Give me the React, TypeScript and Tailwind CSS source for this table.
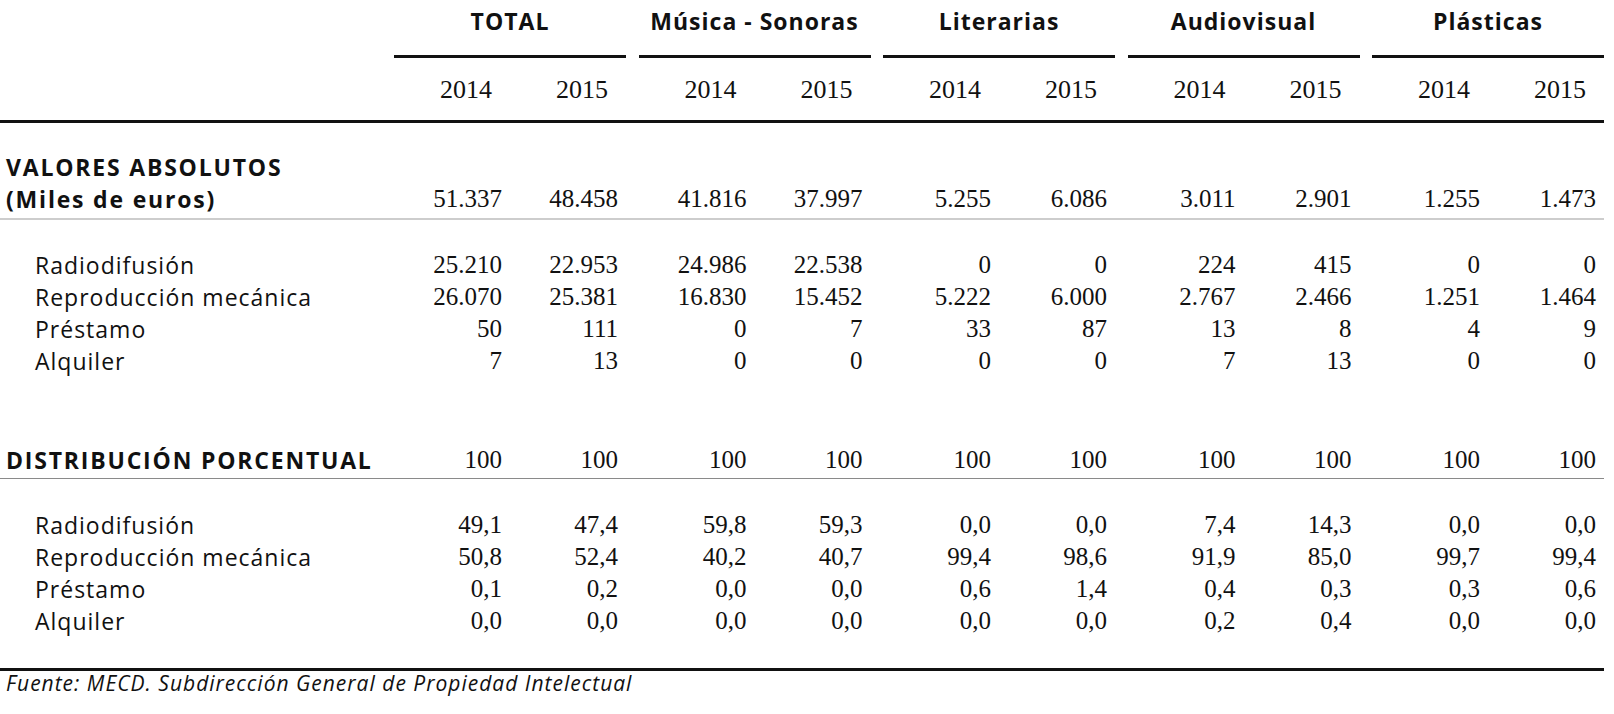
const groups = ["TOTAL", "Música - Sonoras", "Literarias", "Audiovisual", "Plásticas"];

const absolutos = ["51.337", "48.458", "41.816", "37.997", "5.255", "6.086", "3.011", "2.901", "1.255", "1.473"];

const absRows = [
  { label: "Radiodifusión", values: ["25.210", "22.953", "24.986", "22.538", "0", "0", "224", "415", "0", "0"] },
  { label: "Reproducción mecánica", values: ["26.070", "25.381", "16.830", "15.452", "5.222", "6.000", "2.767", "2.466", "1.251", "1.464"] },
  { label: "Préstamo", values: ["50", "111", "0", "7", "33", "87", "13", "8", "4", "9"] },
  { label: "Alquiler", values: ["7", "13", "0", "0", "0", "0", "7", "13", "0", "0"] },
];

const pctTotals = ["100", "100", "100", "100", "100", "100", "100", "100", "100", "100"];

const pctRows = [
  { label: "Radiodifusión", values: ["49,1", "47,4", "59,8", "59,3", "0,0", "0,0", "7,4", "14,3", "0,0", "0,0"] },
  { label: "Reproducción mecánica", values: ["50,8", "52,4", "40,2", "40,7", "99,4", "98,6", "91,9", "85,0", "99,7", "99,4"] },
  { label: "Préstamo", values: ["0,1", "0,2", "0,0", "0,0", "0,6", "1,4", "0,4", "0,3", "0,3", "0,6"] },
  { label: "Alquiler", values: ["0,0", "0,0", "0,0", "0,0", "0,0", "0,0", "0,2", "0,4", "0,0", "0,0"] },
];

const sans = "font-['Open_Sans','Noto_Sans',sans-serif]";
const serif = "font-['Liberation_Serif','Times_New_Roman',serif]";

const Values = ({ values }: { values: string[] }) => (
  <div className="flex gap-[12.5px]">
    {groups.map((g, i) => (
      <div key={g} className="grid w-[232px] grid-cols-2">
        <div className="pr-[8px] text-right">{values[i * 2]}</div>
        <div className="pr-[8px] text-right">{values[i * 2 + 1]}</div>
      </div>
    ))}
  </div>
);

const DataRow = ({ label, values }: { label: string; values: string[] }) => (
  <div className="flex h-[32px] items-center">
    <div className={`w-[394px] shrink-0 pl-[35px] text-[23px] tracking-[1px] text-[#111] ${sans}`}>{label}</div>
    <div className={`text-[25px] text-[#111] ${serif}`}>
      <Values values={values} />
    </div>
  </div>
);

export default function App() {
  return (
    <div className="h-[714px] w-[1614px] bg-white text-[#111]">
      <div className="w-[1604px]">
        {/* group headings */}
        <div className="flex">
          <div className="w-[394px] shrink-0" />
          <div className="flex gap-[12.5px]">
            {groups.map((g) => (
              <div
                key={g}
                className={`w-[232px] border-b-[3px] border-[#111] pt-[6px] pb-[19px] text-center text-[23px] leading-[30px] font-bold tracking-[1px] ${sans}`}
              >
                {g}
              </div>
            ))}
          </div>
        </div>

        {/* years */}
        <div className="flex border-b-[3px] border-[#111] pt-[16px] pb-[14px]">
          <div className="w-[394px] shrink-0" />
          <div className="flex gap-[12.5px]">
            {groups.map((g) => (
              <div key={g} className={`grid w-[232px] grid-cols-2 text-[26px] leading-[32px] ${serif}`}>
                <div className="pr-[18px] text-right">2014</div>
                <div className="pr-[18px] text-right">2015</div>
              </div>
            ))}
          </div>
        </div>

        {/* valores absolutos */}
        <div className="flex items-end border-b-2 border-[#cdcdcd] pt-[28px] pb-[3px]">
          <div className={`w-[394px] shrink-0 pl-[6px] text-[23px] leading-[32px] font-bold tracking-[1.8px] ${sans}`}>
            <div>VALORES ABSOLUTOS</div>
            <div>(Miles de euros)</div>
          </div>
          <div className={`text-[25px] leading-[32px] ${serif}`}>
            <Values values={absolutos} />
          </div>
        </div>

        <div className="pt-[29px]">
          {absRows.map((r) => (
            <DataRow key={r.label} label={r.label} values={r.values} />
          ))}
        </div>

        {/* distribución porcentual */}
        <div className="mt-[67px] flex items-end border-b border-[#8a8a8a] pb-[2px]">
          <div className={`w-[394px] shrink-0 pl-[6px] text-[23px] leading-[32px] font-bold tracking-[1.8px] ${sans}`}>
            DISTRIBUCIÓN PORCENTUAL
          </div>
          <div className={`text-[25px] leading-[32px] ${serif}`}>
            <Values values={pctTotals} />
          </div>
        </div>

        <div className="pt-[30px]">
          {pctRows.map((r) => (
            <DataRow key={r.label} label={r.label} values={r.values} />
          ))}
        </div>

        <div className="mt-[31px] border-t-[3px] border-[#111]">
          <div className={`pl-[6px] text-[21px] leading-[24px] italic tracking-[1px] ${sans}`}>
            Fuente: MECD. Subdirección General de Propiedad Intelectual
          </div>
        </div>
      </div>
    </div>
  );
}
